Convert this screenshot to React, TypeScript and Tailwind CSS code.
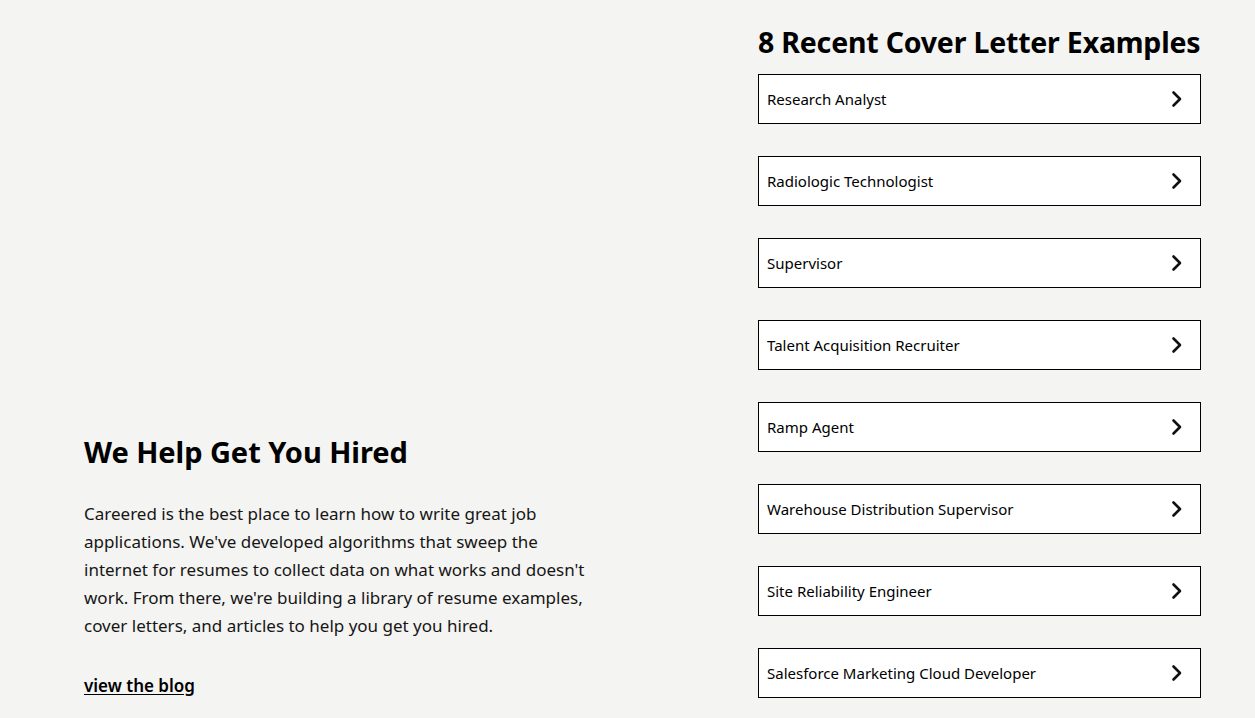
import React from "react";

const examples = [
  "Research Analyst",
  "Radiologic Technologist",
  "Supervisor",
  "Talent Acquisition Recruiter",
  "Ramp Agent",
  "Warehouse Distribution Supervisor",
  "Site Reliability Engineer",
  "Salesforce Marketing Cloud Developer",
];

function Chevron() {
  return (
    <svg width="14" height="18" viewBox="0 0 14 18" fill="none" aria-hidden="true">
      <path d="M3.5 2.5 L10 9 L3.5 15.5" stroke="#111" strokeWidth="2.6" strokeLinecap="round" strokeLinejoin="round" />
    </svg>
  );
}

export default function App() {
  return (
    <div
      className="min-h-[718px] bg-[#f4f4f2] text-black"
      style={{ fontFamily: '"Noto Sans", "Open Sans", sans-serif' }}
    >
      <div className="flex pl-[84px] pr-[54px] pt-[22px]">
        <section className="flex-1 flex flex-col justify-end pb-[18px]">
          <h2 className="whitespace-nowrap text-[29px] font-bold leading-[40px] tracking-[-0.05px]">We Help Get You Hired</h2>
          <p className="mt-[28px] w-[510px] text-[17px] leading-[28px] text-[#161616]">
            Careered is the best place to learn how to write great job applications. We've developed algorithms that
            sweep the internet for resumes to collect data on what works and doesn't work. From there, we're building a
            library of resume examples, cover letters, and articles to help you get you hired.
          </p>
          <a href="#" className="mt-[32px] text-[17px] font-semibold leading-[28px] underline underline-offset-2">
            view the blog
          </a>
        </section>
        <section className="w-[443px]">
          <h2 className="whitespace-nowrap text-[28.5px] font-bold leading-[40px] tracking-[-0.2px]">
            8 Recent Cover Letter Examples
          </h2>
          <ul className="mt-[12px] flex flex-col gap-[32px] pb-[20px]">
            {examples.map((t) => (
              <li key={t}>
                <a
                  href="#"
                  className="flex h-[50px] items-center justify-between border border-black bg-white pl-[8px] pr-[16px] text-[15px]"
                >
                  <span>{t}</span>
                  <Chevron />
                </a>
              </li>
            ))}
          </ul>
        </section>
      </div>
    </div>
  );
}
